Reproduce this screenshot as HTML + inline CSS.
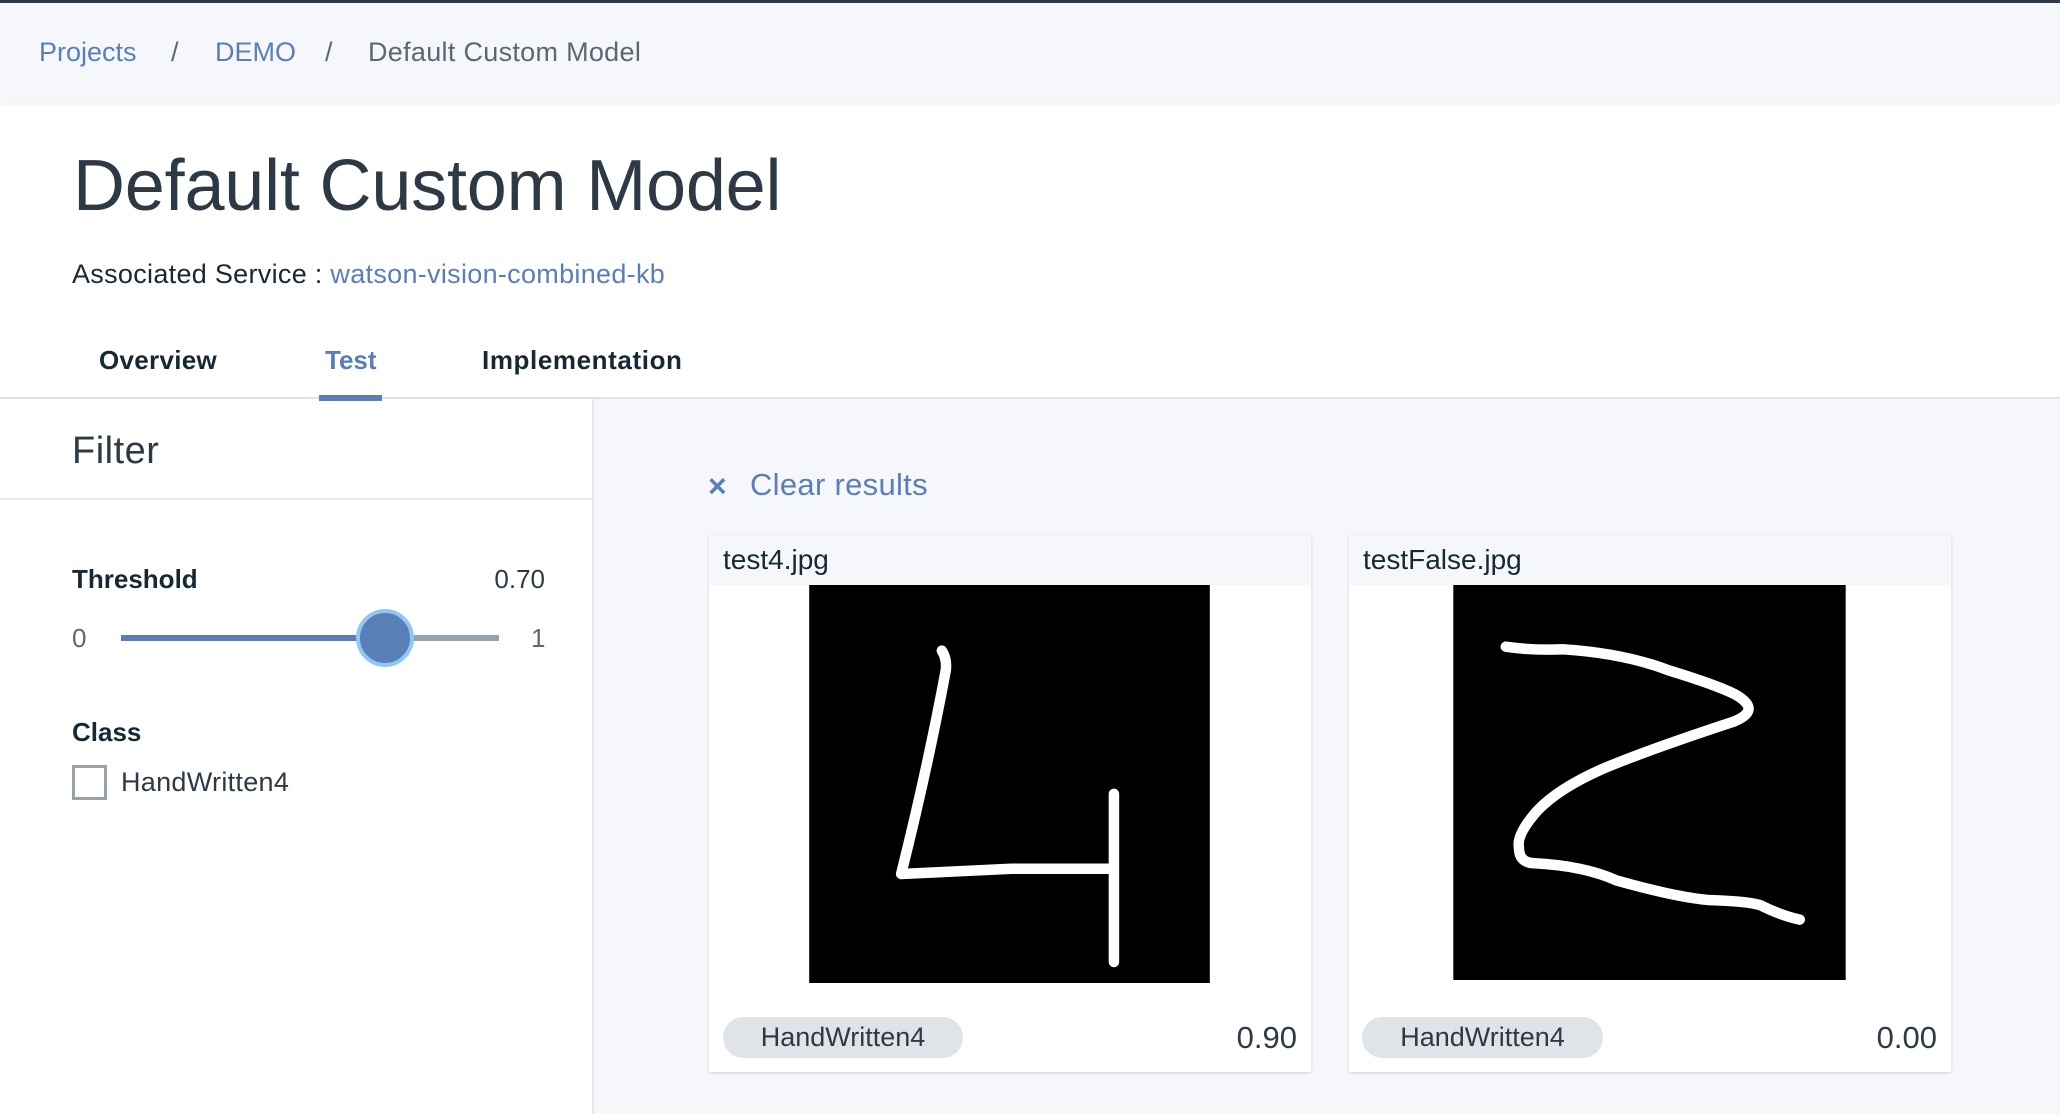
<!DOCTYPE html>
<html><head><meta charset="utf-8"><style>
*{margin:0;padding:0;box-sizing:border-box}
body{width:2060px;height:1114px;overflow:hidden;background:#fff;font-family:"Liberation Sans",sans-serif;color:#152935;position:relative}
.a{position:absolute;white-space:nowrap}
.blue{color:#5a7fb8}
</style></head><body>
<div class="a" style="left:0;top:0;width:2060px;height:103px;background:#f5f7fa;border-top:3px solid #2d3a46;box-shadow:0 1px 3px rgba(0,0,0,.08)"></div>
<div class="a" style="left:39px;top:36px;font-size:27px;line-height:32px;color:#5a7fb8">Projects</div>
<div class="a" style="left:171px;top:36px;font-size:27px;line-height:32px;color:#5a6872">/</div>
<div class="a" style="left:215px;top:36px;font-size:27px;line-height:32px;color:#5a7fb8">DEMO</div>
<div class="a" style="left:325px;top:36px;font-size:27px;line-height:32px;color:#5a6872">/</div>
<div class="a" style="left:368px;top:36px;font-size:27px;line-height:32px;color:#5a6872;letter-spacing:0.3px">Default Custom Model</div>

<div class="a" style="left:73px;top:144px;font-size:72px;line-height:84px;color:#2d3a46;letter-spacing:-0.2px">Default Custom Model</div>
<div class="a" style="left:72px;top:258px;font-size:27px;line-height:32px;color:#152935;letter-spacing:0.3px">Associated Service : <span class="blue">watson-vision-combined-kb</span></div>

<div class="a" style="left:99px;top:344px;font-size:26px;line-height:32px;font-weight:bold;color:#152935;letter-spacing:0.3px">Overview</div>
<div class="a" style="left:325px;top:344px;font-size:26px;line-height:32px;font-weight:bold;color:#5a7fb8">Test</div>
<div class="a" style="left:482px;top:344px;font-size:26px;line-height:32px;font-weight:bold;color:#152935;letter-spacing:0.6px">Implementation</div>
<div class="a" style="left:0;top:397px;width:2060px;height:2px;background:#dfe3e6"></div>
<div class="a" style="left:319px;top:395px;width:63px;height:6px;background:#5a7fb8"></div>

<div class="a" style="left:592px;top:399px;width:1468px;height:715px;background:#f5f7fa;border-left:2px solid #e6e9ec"></div>
<div class="a" style="left:72px;top:427px;font-size:38px;line-height:48px;color:#2d3a46;letter-spacing:0.5px">Filter</div>
<div class="a" style="left:0;top:498px;width:592px;height:2px;background:#e6e9ec"></div>

<div class="a" style="left:72px;top:563px;font-size:26px;line-height:32px;font-weight:bold">Threshold</div>
<div class="a" style="left:470px;top:563px;width:75px;text-align:right;font-size:26px;line-height:32px;color:#2d3a46">0.70</div>
<div class="a" style="left:72px;top:622px;font-size:26px;line-height:32px;color:#5a6872">0</div>
<div class="a" style="left:121px;top:635px;width:378px;height:6px;background:#98a2aa"></div>
<div class="a" style="left:121px;top:635px;width:264px;height:6px;background:#5a7fb8"></div>
<div class="a" style="left:356px;top:609px;width:58px;height:58px;border-radius:50%;background:#5a7fb8;border:4px solid #8fc7f5"></div>
<div class="a" style="left:531px;top:622px;font-size:26px;line-height:32px;color:#5a6872">1</div>

<div class="a" style="left:72px;top:716px;font-size:26px;line-height:32px;font-weight:bold">Class</div>
<div class="a" style="left:72px;top:765px;width:35px;height:35px;border:3px solid #98a2aa;background:#fff"></div>
<div class="a" style="left:121px;top:766px;font-size:27px;line-height:32px;color:#2d3a46;letter-spacing:0.3px">HandWritten4</div>

<div class="a" style="left:708px;top:470px;font-size:32px;line-height:32px;color:#5a7fb8;font-weight:bold">×</div>
<div class="a" style="left:750px;top:466px;font-size:31px;line-height:38px;color:#5a7fb8;letter-spacing:0.3px">Clear results</div>

<div class="a" style="left:709px;top:535px;width:602px;height:537px;background:#fff;box-shadow:0 1px 3px rgba(0,0,0,.15)">
 <div style="height:50px;background:#f5f7fa;padding-left:14px;font-size:28px;line-height:50px;color:#152935">test4.jpg</div>
 <svg style="position:absolute;left:100px;top:50px" width="401" height="398" viewBox="0 0 305 303"><rect width="305" height="303" fill="#000"/>
 <path d="M101 50 Q105 56 104 65 Q90 140 70 220 L154 216 L232 216 M232 159 L232 287" stroke="#fff" stroke-width="8" fill="none" stroke-linecap="round" stroke-linejoin="round"/></svg>
 <div class="a" style="left:14px;top:482px;width:240px;height:41px;border-radius:21px;background:#e0e4e8;text-align:center;font-size:27px;line-height:41px;color:#2d3a46">HandWritten4</div>
 <div class="a" style="right:14px;top:484px;font-size:31px;line-height:38px;color:#2d3a46">0.90</div>
</div>

<div class="a" style="left:1349px;top:535px;width:602px;height:537px;background:#fff;box-shadow:0 1px 3px rgba(0,0,0,.15)">
 <div style="height:50px;background:#f5f7fa;padding-left:14px;font-size:28px;line-height:50px;color:#152935">testFalse.jpg</div>
 <svg style="position:absolute;left:104px;top:50px" width="393" height="395" viewBox="0 0 299 301"><rect width="299" height="301" fill="#000"/>
 <path d="M40 47 Q60 50 84 49 Q130 52 164 65 Q200 76 214 83 Q236 95 214 104 Q150 125 114 140 Q80 155 64 172 Q48 190 50 200 Q50 212 62 212 Q100 214 124 225 Q170 238 194 240 Q225 241 234 244 Q250 252 264 255" stroke="#fff" stroke-width="8" fill="none" stroke-linecap="round" stroke-linejoin="round"/></svg>
 <div class="a" style="left:13px;top:482px;width:241px;height:41px;border-radius:21px;background:#e0e4e8;text-align:center;font-size:27px;line-height:41px;color:#2d3a46">HandWritten4</div>
 <div class="a" style="right:14px;top:484px;font-size:31px;line-height:38px;color:#2d3a46">0.00</div>
</div>
</body></html>
